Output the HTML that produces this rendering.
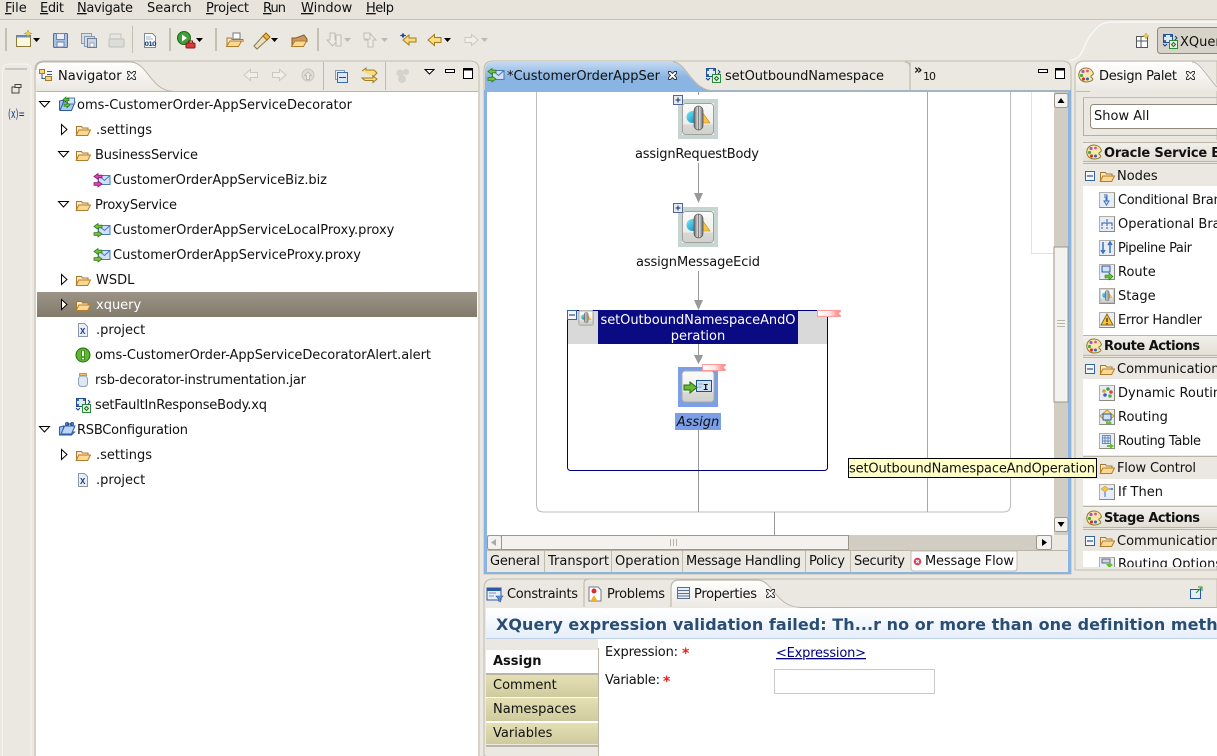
<!DOCTYPE html>
<html><head><meta charset="utf-8"><title>Oracle Workshop</title>
<style>
html,body{margin:0;padding:0;background:#ebe8e2;overflow:hidden;width:1217px;height:756px}
svg{display:block}
text{font-family:"DejaVu Sans",sans-serif;font-size:13px;fill:#111;white-space:pre}
.b{font-weight:bold}
</style></head><body>
<svg width="1217" height="756" viewBox="0 0 1217 756" xmlns="http://www.w3.org/2000/svg" shape-rendering="auto">
<defs>
<linearGradient id="gtab" x1="0" y1="0" x2="0" y2="1"><stop offset="0" stop-color="#ffffff"/><stop offset="1" stop-color="#ebe8e2"/></linearGradient>
<linearGradient id="gblue" x1="0" y1="0" x2="0" y2="1"><stop offset="0" stop-color="#c4daf2"/><stop offset=".5" stop-color="#8ab5e2"/><stop offset="1" stop-color="#8ab5e2"/></linearGradient>
<linearGradient id="gsel" x1="0" y1="0" x2="0" y2="1"><stop offset="0" stop-color="#9c9587"/><stop offset="1" stop-color="#827b6c"/></linearGradient>
<linearGradient id="ghead" x1="0" y1="0" x2="0" y2="1"><stop offset="0" stop-color="#ffffff"/><stop offset="1" stop-color="#e6eefa"/></linearGradient>
<linearGradient id="golive" x1="0" y1="0" x2="0" y2="1"><stop offset="0" stop-color="#e4e0b4"/><stop offset="1" stop-color="#cfcb9f"/></linearGradient>
<linearGradient id="gbtn" x1="0" y1="0" x2="0" y2="1"><stop offset="0" stop-color="#fbfbfa"/><stop offset=".65" stop-color="#eeeeec"/><stop offset=".7" stop-color="#d8d8d4"/><stop offset="1" stop-color="#d0d0cc"/></linearGradient>
<linearGradient id="gpal" x1="0" y1="0" x2="0" y2="1"><stop offset="0" stop-color="#f2f0ec"/><stop offset="1" stop-color="#e2ded5"/></linearGradient>
<linearGradient id="gflag" x1="0" y1="0" x2="1" y2="0"><stop offset="0" stop-color="#fff"/><stop offset=".5" stop-color="#ffe8e8"/><stop offset="1" stop-color="#ff7070"/></linearGradient>
<linearGradient id="gball" x1="0" y1="0" x2="1" y2="1"><stop offset="0" stop-color="#7ae8f5"/><stop offset="1" stop-color="#0088c0"/></linearGradient>
<linearGradient id="gpill" x1="0" y1="0" x2="1" y2="0"><stop offset="0" stop-color="#666"/><stop offset=".5" stop-color="#eee"/><stop offset="1" stop-color="#666"/></linearGradient>
<clipPath id="cEd"><rect x="487" y="92" width="567" height="443"/></clipPath>
<clipPath id="cPal"><rect x="1083" y="140" width="134" height="427"/></clipPath>

<symbol id="folder" viewBox="0 0 16 16"><path d="M1.500 13V4.500h5l1 1.500h5.500v2" fill="#fbeac4" stroke="#a9772c"/><path d="M1.200 13.500 3.800 8H15.500l-2.800 5.500z" fill="#fdd98f" stroke="#b27e2e"/></symbol>
<symbol id="proxy" viewBox="0 0 18 16"><rect x="5.500" y="3.500" width="11.500" height="9" fill="#cfe0f7" stroke="#4a78b8"/><path d="M5.500 3.500l6 5 5.500-5" fill="none" stroke="#4a78b8"/><path d="M1 4.500l4-3v1.700h4v2.600H5v1.700z" fill="#7cc440" stroke="#2e7d18" stroke-width=".8"/><path d="M9 11.500l-4-3v1.700H1v2.600h4v1.700z" transform="translate(0,.5)" fill="#7cc440" stroke="#2e7d18" stroke-width=".8"/></symbol>
<symbol id="biz" viewBox="0 0 18 16"><rect x="5.500" y="3.500" width="11.500" height="9" fill="#cfe0f7" stroke="#4a78b8"/><path d="M5.500 3.500l6 5 5.500-5" fill="none" stroke="#4a78b8"/><path d="M1 4.500l4-3v1.700h4v2.600H5v1.700z" fill="#e040b8" stroke="#8a1a70" stroke-width=".8"/><path d="M9 12l-4-3v1.700H1v2.600h4V15z" fill="#e040b8" stroke="#8a1a70" stroke-width=".8"/></symbol>
<symbol id="xfile" viewBox="0 0 16 16"><path d="M3.500 1.500h6l3 3v10h-9z" fill="#e8eff9" stroke="#8a97ab"/><text x="5" y="12" style="font-size:9px;font-weight:bold;font-family:'Liberation Mono',monospace;fill:#1b3f8a">X</text></symbol>
<symbol id="alert" viewBox="0 0 16 16"><circle cx="8" cy="8" r="7" fill="#5cb82c" stroke="#1f6a10"/><rect x="6.800" y="3.500" width="2.400" height="6" fill="#fff" stroke="#14500a" stroke-width=".5"/><rect x="6.800" y="10.500" width="2.400" height="2.200" fill="#fff" stroke="#14500a" stroke-width=".5"/></symbol>
<symbol id="jar" viewBox="0 0 16 16"><rect x="4.500" y="1.500" width="7" height="2" fill="#f0c060" stroke="#b28a30" stroke-width=".8"/><rect x="3.500" y="4" width="9" height="10.500" rx="3" fill="#dde8f6" stroke="#8ea2bd"/></symbol>
<symbol id="xq" viewBox="0 0 16 16"><rect x="1.500" y="1.500" width="9" height="8" fill="#dfeaf8" stroke="#1f4f96"/><circle cx="3" cy="3" r="1" fill="#123d80"/><circle cx="9" cy="3" r="1" fill="#123d80"/><circle cx="3" cy="8" r="1" fill="#123d80"/><rect x="7.500" y="7.500" width="8" height="8" fill="#e6f4e0" stroke="#2c8a3a"/><path d="M11.500 9.500l2 2-2 2-2-2z" fill="none" stroke="#1d6a2a"/><path d="M13 3l2 2-2 2" fill="none" stroke="#123d80"/><path d="M1 11l2 2 2-2" fill="none" stroke="#123d80"/></symbol>
<symbol id="rsb" viewBox="0 0 18 16"><path d="M1.500 14V6l4-1v7l11-1-3 3z" fill="#9fc4ee" stroke="#2e5aa8"/><path d="M3 13 6.500 5H17l-3.500 8z" fill="#bcd5f4" stroke="#2e5aa8"/><circle cx="9" cy="3" r="1.700" fill="#5a82c8" stroke="#1f3f80" stroke-width=".6"/><circle cx="14" cy="3" r="1.700" fill="#5a82c8" stroke="#1f3f80" stroke-width=".6"/><path d="M9 3h5" stroke="#1f3f80"/></symbol>
<symbol id="oms" viewBox="0 0 18 16"><path d="M1.500 14V5l4-1v7" fill="#9fc4ee" stroke="#2e5aa8"/><path d="M2 14.500 5.500 6H17l-3.500 8.500z" fill="#a9c9f0" stroke="#2e5aa8"/><rect x="9.500" y="2" width="7" height="6" fill="#d5e3f7" stroke="#4a78b8"/><path d="M5 3.500l3-2.500v1.500h3v2.200H8V6z" fill="#66c02e" stroke="#1f7a10" stroke-width=".7"/><path d="M12 9 9 6.500V8H6v2.200h3v1.500z" fill="#66c02e" stroke="#1f7a10" stroke-width=".7"/></symbol>
<symbol id="nodeicon" viewBox="0 0 32 32"><rect x=".5" y=".5" width="31" height="31" rx="3" fill="url(#gbtn)" stroke="#a0a09c"/><path d="M21 10l7 10h-7z" fill="#f7c340" stroke="#b88a18" stroke-width=".6"/><circle cx="10.500" cy="14" r="6" fill="url(#gball)"/><rect x="12" y="3" width="9" height="24" rx="4.500" fill="url(#gpill)" stroke="#555" stroke-width=".7"/><path d="M16.500 3v24" stroke="#666" stroke-width=".8"/></symbol>
<symbol id="plus" viewBox="0 0 10 10"><rect x=".5" y=".5" width="9" height="9" fill="#e4ebf8" stroke="#4f6796"/><path d="M2.500 5h5M5 2.500v5" stroke="#1a2a50"/></symbol>
<symbol id="minus" viewBox="0 0 10 10"><rect x=".5" y=".5" width="9" height="9" fill="#f2f6fd" stroke="#3063a8"/><path d="M2 5h6" stroke="#1a2a50"/></symbol>
<symbol id="close" viewBox="0 0 11 11"><path d="M1.500 1.500h2l2 2 2-2h2v2l-2 2 2 2v2h-2l-2-2-2 2h-2v-2l2-2-2-2z" fill="#fff" stroke="#333" stroke-width=".9"/></symbol>
<symbol id="flag" viewBox="0 0 24 7"><path d="M.5.500H24l-3 3 3 3H.5z" fill="url(#gflag)" stroke="#ff9a9a" stroke-width="1"/></symbol>
<symbol id="palette" viewBox="0 0 16 16"><path d="M8 1C3.500 1 .8 4 .8 8s3 7 7.500 7c2.500 0 6-1 6.500-2.500.4-1.500-2-1.500-2-3s3-1 2.500-3.500C14.300 3 11.500 1 8 1z" fill="#f8e9a8" stroke="#8a7a28"/><circle cx="5" cy="4.500" r="1.600" fill="#b050d8"/><circle cx="9.500" cy="4" r="1.400" fill="#e05090"/><circle cx="3.500" cy="8.500" r="1.600" fill="#40b040"/><circle cx="5.500" cy="12" r="1.600" fill="#e03030"/><circle cx="9.500" cy="12" r="1.500" fill="#3060e0"/></symbol>
<symbol id="tile" viewBox="0 0 16 16"><rect x=".5" y=".5" width="15" height="15" fill="#e8edf5" stroke="#b0aea6"/><path d="M.5 15.500h15V.5" fill="none" stroke="#8a887f"/></symbol>
</defs>

<!-- menu -->
<rect x="0" y="0" width="1217" height="19" fill="#e8e4dc"/>
<rect x="0" y="19" width="1217" height="1" fill="#c6c1b3"/>
<g>
<text x="5" y="12"><tspan text-decoration="underline">F</tspan>ile</text>
<text x="40" y="12" textLength="24"><tspan text-decoration="underline">E</tspan>dit</text>
<text x="77" y="12" textLength="56"><tspan text-decoration="underline">N</tspan>avigate</text>
<text x="147" y="12">Search</text>
<text x="206" y="12" textLength="43"><tspan text-decoration="underline">P</tspan>roject</text>
<text x="263" y="12" textLength="23"><tspan text-decoration="underline">R</tspan>un</text>
<text x="301" y="12"><tspan text-decoration="underline">W</tspan>indow</text>
<text x="366" y="12" textLength="28"><tspan text-decoration="underline">H</tspan>elp</text>
</g>

<!-- toolbar -->
<g fill="#c4bfb1">
<rect x="5" y="28" width="2" height="23"/><rect x="132" y="26" width="1" height="27"/><rect x="169" y="28" width="2" height="23"/><rect x="215" y="28" width="2" height="23"/><rect x="317" y="28" width="2" height="23"/>
</g>
<g>
<!-- new -->
<rect x="16.500" y="35.500" width="14" height="11" fill="#fdf7dc" stroke="#8a7a3a"/><rect x="16.500" y="35.500" width="14" height="2" fill="#6a8cc8"/><path d="M28 30l1.200 2.500 2.500 1-2.500 1L28 37l-1.200-2.500-2.500-1 2.500-1z" fill="#f5d050" stroke="#a88a20" stroke-width=".5"/>
<!-- save -->
<rect x="53.500" y="33.500" width="14" height="14" rx="1" fill="#a9c0e0" stroke="#4f6f9e"/><rect x="56.500" y="33.500" width="8" height="6" fill="#e9f0f9" stroke="#6c86ae"/><rect x="57" y="42" width="7" height="5" fill="#eef2f8" stroke="#6c86ae"/>
<!-- save all -->
<rect x="81.500" y="33.500" width="10" height="10" fill="#d6dee8" stroke="#8a9aae"/><rect x="84.500" y="36.500" width="10" height="10" fill="#d6dee8" stroke="#8a9aae"/><rect x="87.500" y="38.500" width="9" height="9" fill="#cad6e6" stroke="#6c7d96"/><rect x="90" y="43" width="4" height="4" fill="#fff" stroke="#6c7d96" stroke-width=".6"/>
<!-- print -->
<rect x="110" y="34" width="11" height="6" fill="#e6e6e2" stroke="#c4c4c0"/><rect x="109" y="39" width="15" height="8" rx="1" fill="#dcdcd8" stroke="#c0c0bc"/>
<!-- 010 -->
<path d="M144.500 33.500h8l3 3v11h-11z" fill="#fff" stroke="#7a8aa5"/><path d="M146 37h5M146 39h7" stroke="#9fb0c8"/><text x="144.500" y="46" textLength="12" style="font-size:6.500px;font-weight:bold;fill:#1a3f80">010</text>
<!-- run -->
<circle cx="184" cy="38" r="6.500" fill="#3fa03a" stroke="#1a6a18"/><path d="M182 34.500l5 3.500-5 3.500z" fill="#fff"/><rect x="186" y="43" width="9" height="5" rx="1" fill="#d63a3a" stroke="#8a1818"/><rect x="188.500" y="41" width="4" height="2" fill="none" stroke="#8a1818"/>
<!-- open -->
<path d="M233 33h7v6h-7z" fill="#fff" stroke="#777"/><path d="M227 46.500V38h4l1 1.500h11V42" fill="#fbeac4" stroke="#a9772c"/><path d="M226.500 46.500 230 41h11.500l-3 5.500z" fill="#fdd98f" stroke="#b27e2e"/>
<!-- torch -->
<path d="M254 46l9-10 4 4-10 9z" fill="#e8e0c0" stroke="#8a7a50"/><path d="M263 36l3-3 4 4-3 3z" fill="#f0b840" stroke="#9a6a10"/>
<!-- open2 -->
<path d="M292 46.500V38h4l8-3 3 4v3" fill="#c89860" stroke="#8a5a20"/><path d="M291.500 46.500 295 41h11.500l-3 5.500z" fill="#fdd98f" stroke="#b27e2e"/>
<!-- greyed -->
<g fill="#eeece6" stroke="#c0bdb4"><path d="M330 33h5v7h3l-5.500 6-5.500-6h3z"/><rect x="336" y="35" width="5" height="11"/><path d="M368 47h5v-7h3l-5.500-6-5.500 6h3z"/><rect x="364" y="33" width="6" height="6"/></g>
<!-- nav arrows -->
<path d="M403 33l1 2 2 .5-2 .5-1 2-1-2-2-.5 2-.5z" fill="#1c44a8" stroke="#1c44a8" stroke-width=".5"/><path d="M403 40l6-5v3h7v4h-7v3z" fill="#f9dc7f" stroke="#a17c20"/>
<path d="M428 40l6.500-5.500v3h6.500v5h-6.500v3z" fill="#f9dc7f" stroke="#a17c20"/>
<path d="M478 40l-6.500-5.500v3H465v5h6.500v3z" fill="#f1efe9" stroke="#cbc8bf"/>
<!-- carets -->
<g fill="#000"><path d="M33 38h7l-3.500 4zM196 38h7l-3.500 4zM271 38h7l-3.500 4zM444 38h7l-3.500 4z"/></g>
<g fill="#bdbab0"><path d="M344 38h7l-3.500 4zM381 38h7l-3.500 4zM481 38h7l-3.500 4z"/></g>
</g>

<!-- perspective switcher -->
<path d="M1070 60C1085 60 1082 42 1095 30 1100 24 1104 22 1115 22H1217" fill="none" stroke="#fbfaf7" stroke-width="1.200"/>
<rect x="1136.500" y="36.500" width="11" height="11" fill="#fff" stroke="#55575a"/><path d="M1136 41h12M1141 36v12" stroke="#55575a"/><path d="M1146 33l1 2 2 1-2 1-1 2-1-2-2-1 2-1z" fill="#f5d050" stroke="#b09020" stroke-width=".5"/>
<rect x="1157.500" y="27.500" width="70" height="26" rx="3" fill="#d8d3c9" stroke="#8f8a7d"/>
<use href="#xq" x="1162" y="33" width="16" height="16"/>
<text x="1180" y="46">XQuer</text>

<!-- left trim -->
<path d="M2.500 756V71q0-7 7-7H25q6 0 6 7V756" fill="#ebe8e2" stroke="#f6f4ef"/>
<rect x="5" y="68" width="22" height="2" fill="#cbc7ba"/>
<rect x="12" y="87" width="7" height="6" fill="#ebe8e2" stroke="#444"/><rect x="15" y="84.500" width="6" height="3" fill="#ebe8e2" stroke="#444"/>
<text x="8" y="118" textLength="17" lengthAdjust="spacingAndGlyphs" style="font-size:12px;fill:#1c3a78">(x)=</text>

<!-- Navigator -->
<path d="M35 756V70q0-9 9-9H470q9 0 9 9V756" fill="#ebe8e2" stroke="#c0bbac"/>
<path d="M36 91V70q0-8 8-8H130c18 0 20 28 44 28.500H36z" fill="url(#gtab)"/>
<path d="M36 70q0-8 8-8H130c18 0 20 29 44 29.500H478" fill="none" stroke="#bab5a6"/>
<rect x="36" y="92" width="442" height="664" fill="#fff"/>
<rect x="36.500" y="91" width="441" height="1" fill="#bab5a6"/>
<rect x="323" y="62" width="1" height="28" fill="#c0bbac"/><rect x="385" y="62" width="1" height="28" fill="#c0bbac"/>
<!-- nav icon -->
<rect x="39.500" y="69.500" width="5" height="4" fill="#f4d888" stroke="#a17c20"/><rect x="45.500" y="76.500" width="6" height="4" fill="#f4d888" stroke="#a17c20"/><path d="M42 74v4.500h3M47 71.500h5M47 74.500h5" stroke="#3a5a8a" fill="none"/>
<text x="58" y="80">Navigator</text>
<use href="#close" x="126" y="70" width="11" height="11"/>
<g fill="#f0eee8" stroke="#cbc8bf"><path d="M244 75l6.500-5.500v3h7v5h-7v3z"/><path d="M286 75l-6.500-5.500v3h-7v5h7v3z"/></g>
<circle cx="308" cy="75" r="6" fill="#e0ddd5" stroke="#c8c5bb"/><path d="M308 72l3.500 3.500h-2v4h-3v-4h-2z" fill="#f0eee8" stroke="#c0bdb3"/>
<rect x="335.500" y="70.500" width="9" height="9" fill="#eef2f8" stroke="#6c86ae" opacity=".8"/><rect x="337.500" y="72.500" width="10" height="10" fill="#dce6f5" stroke="#3f6aa8"/><path d="M339 77.500h7" stroke="#22448a"/>
<path d="M362 71l4-3v2h8l3 3-3 3h-2" fill="#f9dc7f" stroke="#a17c20"/><path d="M377 79l-4 3.500v-2h-8l-3-2.500h11v-2z" fill="#f9dc7f" stroke="#a17c20"/>
<circle cx="400" cy="73" r="3.500" fill="#d4d2cc"/><circle cx="406" cy="72" r="3" fill="#d4d2cc"/><circle cx="402" cy="79" r="4" fill="#d4d2cc"/>
<path d="M425 69.500h9l-4.500 4.500z" fill="#fff" stroke="#000"/>
<rect x="445.500" y="69.500" width="9" height="3" fill="#fff" stroke="#000"/>
<rect x="463.500" y="68.500" width="9" height="10" fill="#fff" stroke="#000"/><rect x="463.500" y="68.500" width="9" height="2" fill="#000"/>

<!-- tree -->
<rect x="37" y="292" width="440" height="25" fill="url(#gsel)"/>
<g fill="#fff" stroke="#000"><path d="M39.500 101.500h10l-5 5.500z"/><path d="M58.500 151.500h10l-5 5.500z"/><path d="M58.500 201.500h10l-5 5.500z"/><path d="M39.500 426.500h10l-5 5.500z"/>
<path d="M61.500 124.500v10l5.500-5z"/><path d="M61.500 274.500v10l5.500-5z"/><path d="M61.500 299.500v10l5.500-5z"/><path d="M61.500 449.500v10l5.500-5z"/></g>
<use href="#oms" x="58" y="96" width="18" height="16"/><text x="77" y="109" textLength="275">oms-CustomerOrder-AppServiceDecorator</text>
<use href="#folder" x="75" y="122" width="16" height="16"/><text x="96" y="134">.settings</text>
<use href="#folder" x="75" y="147" width="16" height="16"/><text x="95" y="159" textLength="103">BusinessService</text>
<use href="#biz" x="93" y="172" width="18" height="16"/><text x="113" y="184" textLength="214">CustomerOrderAppServiceBiz.biz</text>
<use href="#folder" x="75" y="197" width="16" height="16"/><text x="95" y="209" textLength="82">ProxyService</text>
<use href="#proxy" x="93" y="222" width="18" height="16"/><text x="113" y="234">CustomerOrderAppServiceLocalProxy.proxy</text>
<use href="#proxy" x="93" y="247" width="18" height="16"/><text x="113" y="259" textLength="248">CustomerOrderAppServiceProxy.proxy</text>
<use href="#folder" x="75" y="272" width="16" height="16"/><text x="96" y="284">WSDL</text>
<use href="#folder" x="75" y="297" width="16" height="16"/><text x="96" y="309" style="fill:#fff">xquery</text>
<use href="#xfile" x="75" y="322" width="16" height="16"/><text x="96" y="334">.project</text>
<use href="#alert" x="75" y="347" width="16" height="16"/><text x="95" y="359" textLength="336">oms-CustomerOrder-AppServiceDecoratorAlert.alert</text>
<use href="#jar" x="75" y="372" width="16" height="16"/><text x="95" y="384" textLength="211">rsb-decorator-instrumentation.jar</text>
<use href="#xq" x="75" y="397" width="16" height="16"/><text x="95" y="409" textLength="172">setFaultInResponseBody.xq</text>
<use href="#rsb" x="58" y="421" width="18" height="16"/><text x="77" y="434" textLength="111">RSBConfiguration</text>
<use href="#folder" x="75" y="447" width="16" height="16"/><text x="96" y="459">.settings</text>
<use href="#xfile" x="75" y="472" width="16" height="16"/><text x="96" y="484">.project</text>

<!-- Editor -->
<path d="M484 574V70q0-9 9-9H1062q9 0 9 9V574z" fill="#ebe8e2" stroke="#c0bbac"/>
<rect x="484" y="90" width="587" height="484" fill="#8ab5e2"/>
<path d="M485 92V70q0-8 8-8H672c14 0 18 28 42 29H485z" fill="url(#gblue)"/>
<path d="M673 62c14 0 18 29 42 29H1070" fill="none" stroke="#bab5a6"/>
<path d="M910 62v29" stroke="#bab5a6" fill="none"/><path d="M905 62q5 0 5 6" stroke="#bab5a6" fill="none"/>
<rect x="487" y="92" width="567" height="443" fill="#fff"/>
<use href="#proxy" x="487" y="67" width="18" height="16"/>
<text x="507" y="80" textLength="153">*CustomerOrderAppSer</text>
<use href="#close" x="667" y="70" width="11" height="11"/>
<use href="#xq" x="705" y="67" width="16" height="16"/>
<text x="725" y="80" textLength="159">setOutboundNamespace</text>
<text x="914" y="74" class="b" style="font-size:13px">»</text><text x="923" y="80" textLength="13" style="font-size:11px">10</text>
<rect x="1038.500" y="69.500" width="9" height="3" fill="#fff" stroke="#000"/>
<rect x="1055.500" y="68.500" width="9" height="10" fill="#fff" stroke="#000"/><rect x="1055.500" y="68.500" width="9" height="2" fill="#000"/>

<g clip-path="url(#cEd)">
<path d="M536.500 85V505q0 7 7 7H1003.500q7 0 7-7V85" fill="none" stroke="#bdbdbd"/>
<path d="M927.500 85V512" stroke="#a8a8a8" fill="none"/>
<path d="M1031.500 85V253.500H1054" stroke="#e2e2e2" fill="none"/>
<path d="M774.500 512V535" stroke="#999" fill="none"/>
<path d="M698.500 92V95M698.500 163V194M698.500 271V302M698.500 344V356M698.500 430V512" stroke="#999" fill="none"/>
<path d="M694 193h9l-4.500 10zM694 300h9l-4.500 10zM694 355h9l-4.500 9z" fill="#999"/>
<!-- nodes -->
<rect x="680" y="101" width="36" height="36" fill="none" stroke="#c6d5d2" stroke-width="4"/>
<use href="#nodeicon" x="682" y="103" width="32" height="32"/>
<use href="#plus" x="673" y="95" width="10" height="10"/>
<text x="697" y="158" text-anchor="middle" textLength="124">assignRequestBody</text>
<rect x="680" y="209" width="36" height="36" fill="none" stroke="#c6d5d2" stroke-width="4"/>
<use href="#nodeicon" x="682" y="211" width="32" height="32"/>
<use href="#plus" x="673" y="203" width="10" height="10"/>
<text x="698" y="266" text-anchor="middle" textLength="124">assignMessageEcid</text>
<!-- stage -->
<rect x="567.500" y="310.500" width="260" height="160" rx="3" fill="none" stroke="#00007f"/>
<rect x="568" y="311" width="259" height="33" fill="#d9d9d9"/>
<rect x="598" y="310" width="200" height="34" fill="#0a0a82"/>
<path d="M698.500 344V356" stroke="#999" fill="none"/>
<path d="M694 355h9l-4.500 9z" fill="#999"/>
<text x="698" y="324" text-anchor="middle" textLength="195" style="fill:#fff">setOutboundNamespaceAndO</text>
<text x="698" y="340" text-anchor="middle" style="fill:#fff">peration</text>
<use href="#minus" x="567" y="310" width="10" height="10"/>
<rect x="578.500" y="310.500" width="15" height="15" rx="2" fill="#eee" stroke="#b8b8b4"/>
<use href="#nodeicon" x="579" y="311" width="14" height="14"/>
<use href="#flag" x="817" y="310" width="24" height="7"/>
<rect x="678" y="367" width="40" height="40" fill="#7a9fe8"/>
<rect x="682" y="371" width="32" height="31" rx="3" fill="url(#gbtn)" stroke="#a8a8a4"/>
<rect x="696.500" y="380.500" width="15" height="11" fill="#d0e0f5" stroke="#1b4f96"/><text x="703" y="390" style="font-size:9px;font-weight:bold;font-family:'Liberation Mono',monospace">I</text><path d="M698.500 384h4M698.500 387h3" stroke="#8aa0c0"/>
<path d="M684 388v-3h6v-3l7 5.500-7 5.500v-3h-6z" fill="#6cb834" stroke="#246e12"/>
<use href="#flag" x="702" y="364" width="24" height="7"/>
<rect x="675" y="413" width="46" height="17" fill="#7a9fe8"/>
<text x="698" y="426" text-anchor="middle" style="font-style:italic">Assign</text>
</g>

<!-- editor scrollbars -->
<rect x="1054" y="92" width="14" height="443" fill="#d2cdc3"/>
<rect x="1054.500" y="93.500" width="13.500" height="14" rx="2" fill="#f4f2ee" stroke="#9c978a"/><path d="M1057.500 103h7l-3.500-5z" fill="#000"/>
<rect x="1054" y="247" width="14" height="155" fill="#f4f2ee" stroke="#9c978a"/>
<path d="M1057 320.500h8M1057 323.500h8M1057 326.500h8" stroke="#b8b4a8"/>
<rect x="1054.500" y="517.500" width="13.500" height="14" rx="2" fill="#f4f2ee" stroke="#9c978a"/><path d="M1057.500 522h7l-3.500 5z" fill="#000"/>
<rect x="487" y="535" width="581" height="15" fill="#ebe8e2"/>
<rect x="487" y="535" width="565" height="15" fill="#d2cdc3"/>
<rect x="487.500" y="535.500" width="14" height="14" rx="2" fill="#f4f2ee" stroke="#9c978a"/><path d="M496 539v7l-5-3.500z" fill="#aaa"/>
<rect x="501.500" y="535.500" width="347" height="14" fill="#f4f2ee" stroke="#9c978a"/>
<path d="M670.500 539v7M673.500 539v7M676.500 539v7" stroke="#b8b4a8"/>
<rect x="1036.500" y="535.500" width="15" height="14" rx="2" fill="#f4f2ee" stroke="#9c978a"/><path d="M1042 539v7l5-3.500z" fill="#000"/>
<!-- editor bottom tabs -->
<rect x="487" y="550" width="581" height="22" fill="#ebe8e2"/>
<rect x="487" y="550" width="581" height="1" fill="#bab5a6"/>
<path d="M544.500 551V572M611.500 551V572M682.500 551V572M805.500 551V572M850.500 551V572" stroke="#c0bbac" fill="none"/>
<path d="M911 551V568q0 3 3 3H1014q3 0 3-3V551z" fill="#fff" stroke="#c0bbac"/>
<text x="490" y="565" textLength="50">General</text>
<text x="548" y="565">Transport</text>
<text x="615" y="565">Operation</text>
<text x="686" y="565" textLength="115">Message Handling</text>
<text x="809" y="565" textLength="36">Policy</text>
<text x="854" y="565" textLength="51">Security</text>
<circle cx="917.500" cy="561.500" r="3.800" fill="#e0405a"/><path d="M916 560l3 3M919 560l-3 3" stroke="#fff"/>
<text x="925" y="565" textLength="89">Message Flow</text>

<!-- Palette -->
<path d="M1075 570V70q0-9 9-9H1217V570z" fill="#ebe8e2" stroke="#c0bbac"/>
<path d="M1076 91V70q0-8 8-8H1192c14 0 18 28 42 29H1076z" fill="url(#gtab)"/>
<path d="M1192 62c8 0 16 16 25 25" fill="none" stroke="#bab5a6"/>
<path d="M1076 91.500H1090M1083.500 97.500H1217" stroke="#c0bbac" fill="none"/>
<use href="#palette" x="1078" y="67" width="16" height="16"/>
<text x="1099" y="80" textLength="78">Design Palet</text>
<use href="#close" x="1185" y="70" width="11" height="11"/>
<rect x="1090.500" y="104.500" width="150" height="24" rx="3" fill="#fff" stroke="#8f8a7d"/>
<text x="1094" y="120">Show All</text>
<path d="M1083.500 97.500V135.500H1217" stroke="#b5b0a2" fill="none"/>

<g clip-path="url(#cPal)">
<rect x="1083" y="140" width="134" height="427" fill="#ebe8e2"/>
<!-- headers -->
<rect x="1083" y="142" width="134" height="20" fill="url(#gpal)"/><path d="M1083 142.500H1217M1083 161.500H1217M1083 163.500H1217" stroke="#bab5a6"/>
<use href="#palette" x="1086" y="144" width="16" height="16"/><text x="1104" y="157" class="b" style="letter-spacing:-.2px">Oracle Service Bus</text>
<rect x="1083" y="186" width="134" height="149" fill="#fff"/>
<use href="#minus" x="1085" y="171" width="10" height="10"/><use href="#folder" x="1099" y="168" width="16" height="16"/><text x="1117" y="180">Nodes</text>

<use href="#tile" x="1099" y="192" width="16" height="16"/><path d="M1104 195h3v6h2l-2.500 4-2.500-4h2v-4h-2" fill="none" stroke="#3a70c0"/><text x="1118" y="204" style="letter-spacing:-.3px">Conditional Branch</text>
<use href="#tile" x="1099" y="216" width="16" height="16"/><path d="M1107 219v3M1102 226v-3h10v3M1107 223v3" fill="none" stroke="#2a5aa8"/><path d="M1101 228h2M1106 228h2M1111 228h2" stroke="#2a5aa8"/><text x="1118" y="228">Operational Branch</text>
<use href="#tile" x="1099" y="240" width="16" height="16"/><path d="M1103 242v11M1101 250l2 3 2-3M1110 253v-11M1108 245l2-3 2 3" fill="none" stroke="#3a70c0" stroke-width="1.500"/><text x="1118" y="252" textLength="74">Pipeline Pair</text>
<use href="#tile" x="1099" y="264" width="16" height="16"/><rect x="1102" y="266" width="8" height="6" fill="#cfe0f7" stroke="#2a5aa8"/><path d="M1105 275h4v-2l4 3.500-4 3.500v-2h-4z" fill="#66c02e" stroke="#1f7a10" stroke-width=".6"/><text x="1118" y="276">Route</text>
<use href="#tile" x="1099" y="288" width="16" height="16"/><use href="#nodeicon" x="1100" y="289" width="14" height="14"/><text x="1118" y="300">Stage</text>
<use href="#tile" x="1099" y="312" width="16" height="16"/><path d="M1107 314l6 11h-12z" fill="#f7c340" stroke="#8a6a10"/><path d="M1107 318v4M1107 323v1.500" stroke="#000"/><text x="1118" y="324" textLength="84">Error Handler</text>

<rect x="1083" y="336" width="134" height="20" fill="url(#gpal)"/><path d="M1083 335.500H1217M1083 355.500H1217M1083 357.500H1217" stroke="#bab5a6"/>
<use href="#palette" x="1086" y="338" width="16" height="16"/><text x="1104" y="350" class="b" textLength="96">Route Actions</text>
<rect x="1083" y="379" width="134" height="76" fill="#fff"/>
<use href="#minus" x="1085" y="364" width="10" height="10"/><use href="#folder" x="1099" y="361" width="16" height="16"/><text x="1117" y="373">Communication</text>
<use href="#tile" x="1099" y="385" width="16" height="16"/><circle cx="1104" cy="391" r="1.800" fill="#e0a020"/><circle cx="1108" cy="389" r="1.800" fill="#40a040"/><circle cx="1111" cy="392" r="1.800" fill="#e04040"/><circle cx="1105" cy="395" r="1.800" fill="#4060d0"/><circle cx="1110" cy="396" r="1.800" fill="#60b030"/><text x="1118" y="397">Dynamic Routing</text>
<use href="#tile" x="1099" y="409" width="16" height="16"/><path d="M1107 410l7 6-7 6-7-6z" fill="#f9dc7f" stroke="#c09a30"/><rect x="1103" y="414" width="8" height="6" fill="#cfe0f7" stroke="#2a5aa8"/><path d="M1106 422h3v-1.500l3 2.500-3 2.500V424h-3z" fill="#66c02e"/><text x="1118" y="421">Routing</text>
<use href="#tile" x="1099" y="433" width="16" height="16"/><path d="M1102.500 435.500h8v8h-8zM1105 435.500v8M1108 435.500v8M1102.500 438h8M1102.500 441h8" fill="#dce6f5" stroke="#4a6fa8" stroke-width=".7"/><path d="M1107 445h3v-2l4 3-4 3v-2h-3z" fill="#66c02e"/><text x="1118" y="445" textLength="83">Routing Table</text>

<path d="M1083 456.500H1217" stroke="#bab5a6"/>
<use href="#folder" x="1099" y="460" width="16" height="16"/><text x="1117" y="472" textLength="79">Flow Control</text>
<rect x="1083" y="479" width="134" height="26" fill="#fff"/>
<use href="#tile" x="1099" y="484" width="16" height="16"/><path d="M1105 486l4 3-4 3-4-3z" fill="#f7c340" stroke="#b08a20" stroke-width=".5"/><path d="M1105 492v5M1109 489h3" stroke="#3a70c0"/><circle cx="1112" cy="489" r="1" fill="#3a70c0"/><text x="1118" y="496">If Then</text>

<rect x="1083" y="507" width="134" height="21" fill="url(#gpal)"/><path d="M1083 506.500H1217M1083 527.500H1217M1083 529.500H1217" stroke="#bab5a6"/>
<use href="#palette" x="1086" y="510" width="16" height="16"/><text x="1104" y="522" class="b" textLength="96">Stage Actions</text>
<rect x="1083" y="551" width="134" height="16" fill="#fff"/>
<use href="#minus" x="1085" y="536" width="10" height="10"/><use href="#folder" x="1099" y="533" width="16" height="16"/><text x="1117" y="545">Communication</text>
<use href="#tile" x="1099" y="557" width="16" height="16"/><rect x="1102" y="559" width="8" height="4" fill="#cfd6e0" stroke="#667"/><path d="M1106 564h3v-2l4 3-4 3z" fill="#66c02e"/><text x="1118" y="568">Routing Options</text>
</g>

<!-- tooltip -->
<rect x="848.500" y="458.500" width="248" height="19" fill="#ffffc8" stroke="#000"/>
<text x="849" y="472.500" textLength="246">setOutboundNamespaceAndOperation</text>

<!-- Properties -->
<path d="M484 756V588q0-9 9-9H1217V756z" fill="#ebe8e2" stroke="#c0bbac"/>
<path d="M584 607V583q0-4 5-4M671 607V588q0-8 8-8H758c14 0 18 27 42 27.500H1217" fill="none" stroke="#bab5a6"/>
<path d="M672 607V588q0-7 7-7H758c14 0 18 26 41 26.500H672z" fill="url(#gtab)"/>
<rect x="486" y="608" width="731" height="148" fill="#fff"/>
<rect x="486" y="610" width="731" height="28" fill="url(#ghead)"/>
<rect x="486" y="638" width="731" height="1" fill="#bdd0e8"/>
<rect x="487" y="588" width="14" height="12" fill="#e8eef8" stroke="#2a5aa8"/><rect x="487" y="588" width="14" height="3" fill="#2a5aa8"/><path d="M489 593h7M489 596h5" stroke="#7a90b8"/><path d="M496 596h7l-2.500 3v3l-2-1v-2z" fill="#6a90c8" stroke="#2a5aa8" stroke-width=".6"/>
<text x="507" y="598" textLength="71">Constraints</text>
<path d="M589 587h9l3 3v11h-12z" fill="#fff" stroke="#778"/><circle cx="594" cy="591" r="2.500" fill="#d83030"/><path d="M594 595l3.500 6h-7z" fill="#f0b030"/>
<text x="607" y="598" textLength="58">Problems</text>
<rect x="677.500" y="587.500" width="12" height="11" fill="#e8eef8" stroke="#5a6f8f"/><path d="M678 590.500h11M678 593.500h11M678 596h11" stroke="#5a6f8f"/>
<text x="694" y="598" textLength="63">Properties</text>
<use href="#close" x="765" y="588" width="11" height="11"/>
<rect x="1190.500" y="589.500" width="10" height="9" fill="#e8eef8" stroke="#2a5aa8"/><path d="M1196 593l5-5M1198 587h4v4" stroke="#2c8a3a" fill="none"/>
<text x="496" y="630" class="b" style="font-size:16px;fill:#2a4d73;letter-spacing:.05px">XQuery expression validation failed: Th...r no or more than one definition meth</text>

<rect x="486" y="639" width="112" height="11" fill="#ebe8e2"/>
<rect x="486" y="650" width="112" height="23" fill="#fff"/>
<rect x="486" y="673" width="112" height="2" fill="#bab5a6"/>
<rect x="486" y="675" width="112" height="22" fill="url(#golive)"/>
<rect x="486" y="698" width="112" height="23" fill="url(#golive)"/>
<rect x="486" y="723" width="112" height="21" fill="url(#golive)"/>
<rect x="486" y="744" width="112" height="12" fill="#ebe8e2"/>
<rect x="486" y="745" width="112" height="2" fill="#bab5a6"/>
<rect x="598" y="648" width="1" height="108" fill="#bab5a6"/>
<text x="493" y="665" class="b">Assign</text>
<text x="493" y="689">Comment</text>
<text x="493" y="713">Namespaces</text>
<text x="493" y="737">Variables</text>
<text x="605" y="656" textLength="73">Expression:</text><text x="682" y="658" class="b" style="fill:#e82020;font-size:14px">*</text>
<text x="605" y="684" textLength="55">Variable:</text><text x="663" y="686" class="b" style="fill:#e82020;font-size:14px">*</text>
<text x="776" y="657" textLength="90" style="fill:#000080" text-decoration="underline">&lt;Expression&gt;</text>
<rect x="774.500" y="669.500" width="160" height="24" fill="#fff" stroke="#c8c8c8"/>
</svg>
</body></html>
